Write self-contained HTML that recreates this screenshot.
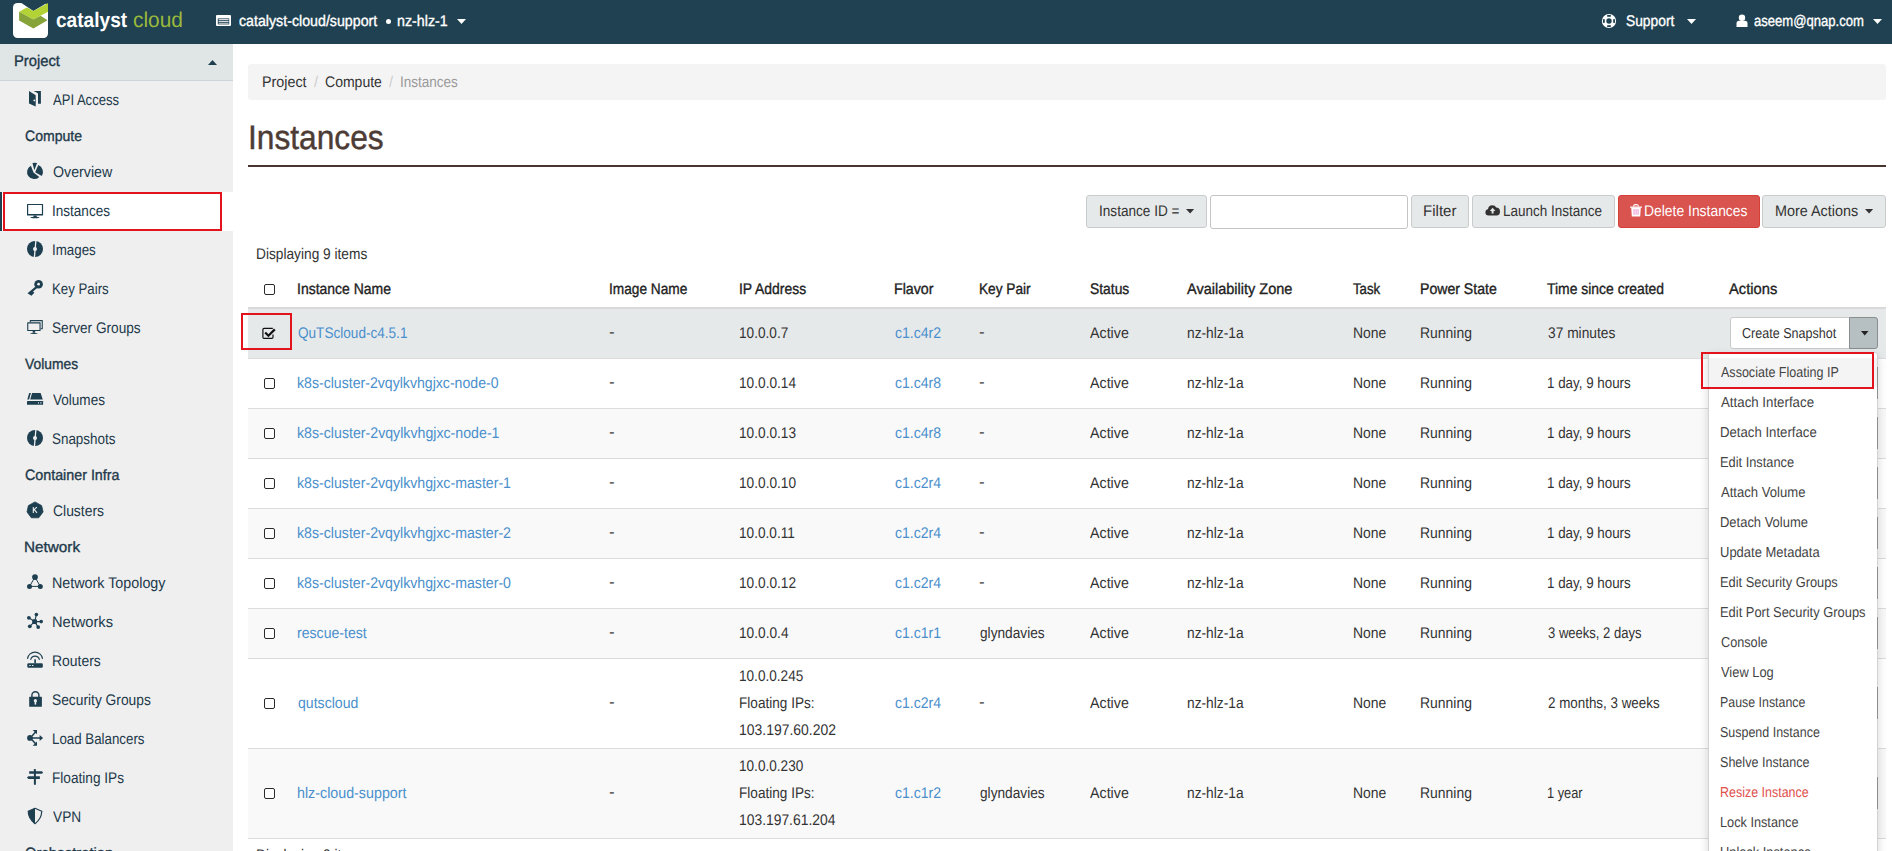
<!DOCTYPE html>
<html><head><meta charset="utf-8"><title>Instances</title>
<style>
*{box-sizing:border-box;margin:0;padding:0}
html,body{width:1892px;height:851px;overflow:hidden;background:#fff;font-family:"Liberation Sans", sans-serif}
.t{position:absolute;line-height:1;white-space:nowrap;transform-origin:0 0;text-rendering:geometricPrecision}
.r{position:absolute}
svg.r{overflow:visible}
</style></head><body>
<div class="r" style="left:0px;top:0px;width:1892px;height:44px;background:#1f4151"></div>
<svg class="r" style="left:0px;top:0px" width="60" height="44" viewBox="0 0 60 44">
<rect x="13" y="3" width="35" height="35" rx="4.5" fill="#fff"/>
<polygon points="19.9,2 33.4,10.9 48.5,2" fill="#1f4151"/>
<polygon points="19.1,11.8 26.8,7.4 33.4,10.9 48,3 48,11.8 33.4,19.5" fill="#b2d235"/>
<polygon points="19.1,11.8 33.4,19.5 40.6,15.8 47.5,20.2 33.4,28.4 19.1,20.5" fill="#86a33a"/>
</svg>
<div class="t" style="left:56.19px;top:10.22px;font-size:21px;font-weight:700;color:#fff;transform:scaleX(0.9091);">catalyst</div>
<div class="t" style="left:132.73px;top:9.80px;font-size:21.5px;font-weight:400;color:#9ab83c;transform:scaleX(0.9714);">cloud</div>
<svg class="r" style="left:216px;top:15px" width="15" height="11" viewBox="0 0 15 11"><rect x="0" y="0" width="15" height="11" rx="1" fill="#fff"/>
<rect x="1.8" y="3.4" width="11.4" height="6" fill="#1f4151"/>
<rect x="2.6" y="4.2" width="10" height="1" fill="#fff"/><rect x="2.6" y="6.2" width="10" height="1" fill="#fff"/><rect x="2.6" y="8.2" width="10" height="0.6" fill="#fff"/></svg>
<div class="t" style="left:238.50px;top:13.76px;font-size:15.4px;font-weight:400;-webkit-text-stroke-width:0.35px;color:#fff;transform:scaleX(0.9233);">catalyst-cloud/support</div>
<div class="r" style="left:386px;top:19px;width:5px;height:5px;background:#fff;border-radius:50%"></div>
<div class="t" style="left:397.07px;top:13.76px;font-size:15.4px;font-weight:400;-webkit-text-stroke-width:0.35px;color:#fff;transform:scaleX(0.9259);">nz-hlz-1</div>
<svg class="r" style="left:457px;top:18.5px" width="9" height="5" viewBox="0 0 9 5"><polygon points="0,0 9,0 4.5,5" fill="#fff"/></svg>
<svg class="r" style="left:1601px;top:13px" width="16" height="16" viewBox="0 0 16 16"><circle cx="8" cy="8" r="7.1" fill="#fff"/><circle cx="8" cy="8" r="2.7" fill="#1f4151"/>
<rect x="6.2" y="2.0" width="3.6" height="1.8" fill="#1f4151"/><rect x="6.2" y="12.2" width="3.6" height="1.8" fill="#1f4151"/>
<rect x="2.0" y="6.2" width="1.8" height="3.6" fill="#1f4151"/><rect x="12.2" y="6.2" width="1.8" height="3.6" fill="#1f4151"/></svg>
<div class="t" style="left:1626.40px;top:13.56px;font-size:15.4px;font-weight:400;-webkit-text-stroke-width:0.35px;color:#fff;transform:scaleX(0.8964);">Support</div>
<svg class="r" style="left:1687px;top:18.5px" width="9" height="5" viewBox="0 0 9 5"><polygon points="0,0 9,0 4.5,5" fill="#fff"/></svg>
<svg class="r" style="left:1736px;top:14px" width="12" height="14" viewBox="0 0 12 14"><circle cx="6" cy="3.7" r="3.2" fill="#fff"/><path d="M0.5 13 L0.5 9.5 Q0.5 6.8 3 6.8 L9 6.8 Q11.5 6.8 11.5 9.5 L11.5 13 Z" fill="#fff"/></svg>
<div class="t" style="left:1754.40px;top:13.56px;font-size:15.4px;font-weight:400;-webkit-text-stroke-width:0.35px;color:#fff;transform:scaleX(0.8496);">aseem@qnap.com</div>
<svg class="r" style="left:1873px;top:18.5px" width="9" height="5" viewBox="0 0 9 5"><polygon points="0,0 9,0 4.5,5" fill="#fff"/></svg>
<div class="r" style="left:0px;top:44px;width:233px;height:807px;background:#efefef"></div>
<div class="r" style="left:0px;top:44px;width:233px;height:36px;background:#e0e5e6"></div>
<div class="r" style="left:0px;top:80px;width:233px;height:1px;background:#cbd4d7"></div>
<div class="t" style="left:14.34px;top:53.66px;font-size:15.4px;font-weight:400;-webkit-text-stroke-width:0.35px;color:#22394a;transform:scaleX(0.9596);">Project</div>
<svg class="r" style="left:208px;top:60px" width="9" height="5" viewBox="0 0 9 5"><polygon points="0,5 4.5,0 9,5" fill="#1e3f50"/></svg>
<svg class="r" style="left:22px;top:88px" width="26" height="26" viewBox="0 0 26 26"><polygon points="7,2.9 13.7,7.2 13.7,18.6 7,15.6" fill="#1e3f50"/><circle cx="12.3" cy="12.4" r="0.9" fill="#efefef"/><polygon points="11.6,2.9 18.9,2.9 18.9,15.7 16,15.7 16,5.4 14.6,4.4 Z" fill="#1e3f50"/></svg>
<div class="t" style="left:52.80px;top:93.16px;font-size:15.4px;font-weight:400;color:#22394a;transform:scaleX(0.8474);">API Access</div>
<div class="t" style="left:25.20px;top:129.10px;font-size:15.0px;font-weight:400;-webkit-text-stroke-width:0.35px;color:#22394a;transform:scaleX(0.9361);">Compute</div>
<svg class="r" style="left:22px;top:158px" width="26" height="26" viewBox="0 0 26 26"><path d="M11.5 14.4 L8.9 7.7 A7.1 7.1 0 1 0 17.3 18.9 Z" fill="#1e3f50"/><path d="M13.2 14.2 L16.3 7.1 A7.3 7.3 0 0 1 19.8 17.9 Z" fill="#1e3f50"/><path d="M10.5 4.9 Q12.8 4.4 15.1 4.9 L12.3 12.2 Z" fill="#1e3f50"/></svg>
<div class="t" style="left:52.80px;top:165.16px;font-size:15.4px;font-weight:400;color:#22394a;transform:scaleX(0.9234);">Overview</div>
<div class="r" style="left:0px;top:192px;width:233px;height:39px;background:#fff"></div>
<div class="r" style="left:0px;top:192px;width:2px;height:39px;background:#1f4151"></div>
<svg class="r" style="left:22px;top:197px" width="26" height="26" viewBox="0 0 26 26"><path d="M5.5 6.9 H20.6 Q21.1 6.9 21.1 7.4 V18.1 Q21.1 18.6 20.6 18.6 H5.5 Q5 18.6 5 18.1 V7.4 Q5 6.9 5.5 6.9 Z M6.2 8.1 V17 H19.9 V8.1 Z" fill="#1e3f50" fill-rule="evenodd"/><rect x="11.5" y="18.5" width="3.2" height="1.6" fill="#1e3f50"/><ellipse cx="12.9" cy="20.5" rx="4.6" ry="0.7" fill="#1e3f50"/></svg>
<div class="t" style="left:51.92px;top:204.16px;font-size:15.4px;font-weight:400;color:#22394a;transform:scaleX(0.8800);">Instances</div>
<svg class="r" style="left:22px;top:236px" width="26" height="26" viewBox="0 0 26 26"><circle cx="13" cy="13" r="8" fill="#1e3f50"/><path d="M13.9 4.5 L12.4 21.5" stroke="#efefef" stroke-width="1.3"/><circle cx="13" cy="13" r="2" fill="#efefef"/></svg>
<div class="t" style="left:51.93px;top:243.16px;font-size:15.4px;font-weight:400;color:#22394a;transform:scaleX(0.8673);">Images</div>
<svg class="r" style="left:22px;top:275px" width="26" height="26" viewBox="0 0 26 26"><circle cx="16.6" cy="9.2" r="4.3" fill="#1e3f50"/><circle cx="16.6" cy="9.2" r="1.4" fill="#efefef"/><path d="M13.6 11.6 L5.5 18.2 L7 19.3 L9.4 20.8 L12.4 17.8 L11 16.6 L15.2 13" fill="#1e3f50"/></svg>
<div class="t" style="left:51.94px;top:282.16px;font-size:15.4px;font-weight:400;color:#22394a;transform:scaleX(0.8615);">Key Pairs</div>
<svg class="r" style="left:22px;top:314px" width="26" height="26" viewBox="0 0 26 26"><path d="M7.8 6.1 H20.3 Q20.8 6.1 20.8 6.6 V14.8 Q20.8 15.3 20.3 15.3 H18.6 V14.2 H19.7 V7.2 H8.9 V8.2 H7.8 V6.6 Q7.8 6.1 8.3 6.1 Z" fill="#1e3f50"/><path d="M5.7 8.2 H18.1 Q18.6 8.2 18.6 8.7 V16.6 Q18.6 17.1 18.1 17.1 H5.7 Q5.2 17.1 5.2 16.6 V8.7 Q5.2 8.2 5.7 8.2 Z M6.3 9.4 V16 H17.5 V9.4 Z" fill="#1e3f50" fill-rule="evenodd"/><rect x="10.7" y="17" width="2.4" height="1.7" fill="#1e3f50"/><ellipse cx="11.9" cy="19.3" rx="3.8" ry="0.65" fill="#1e3f50"/></svg>
<div class="t" style="left:51.91px;top:321.16px;font-size:15.4px;font-weight:400;color:#22394a;transform:scaleX(0.8859);">Server Groups</div>
<div class="t" style="left:25.20px;top:357.10px;font-size:15.0px;font-weight:400;-webkit-text-stroke-width:0.35px;color:#22394a;transform:scaleX(0.9224);">Volumes</div>
<svg class="r" style="left:22px;top:386px" width="26" height="26" viewBox="0 0 26 26"><polygon points="10.1,7 18.6,7 20.8,13.6 8.2,13.6" fill="#1e3f50"/><polygon points="7.2,7 8.9,7 7.1,13.6 5.3,13.6" fill="#1e3f50"/><rect x="5" y="15" width="16.1" height="3.8" rx="0.4" fill="#1e3f50"/><rect x="16" y="16.3" width="1" height="1.1" fill="#efefef"/><rect x="18.2" y="16.3" width="1.3" height="1.1" fill="#efefef"/></svg>
<div class="t" style="left:52.80px;top:393.16px;font-size:15.4px;font-weight:400;color:#22394a;transform:scaleX(0.8797);">Volumes</div>
<svg class="r" style="left:22px;top:425px" width="26" height="26" viewBox="0 0 26 26"><circle cx="13" cy="13" r="8" fill="#1e3f50"/><path d="M13.9 4.5 L12.4 21.5" stroke="#efefef" stroke-width="1.3"/><circle cx="13" cy="13" r="2" fill="#efefef"/></svg>
<div class="t" style="left:51.93px;top:432.16px;font-size:15.4px;font-weight:400;color:#22394a;transform:scaleX(0.8718);">Snapshots</div>
<div class="t" style="left:25.20px;top:468.10px;font-size:15.0px;font-weight:400;-webkit-text-stroke-width:0.35px;color:#22394a;transform:scaleX(0.9520);">Container Infra</div>
<svg class="r" style="left:22px;top:497px" width="26" height="26" viewBox="0 0 26 26"><polygon points="13,4.9 19.6,8.6 21.1,14.9 16.7,20.8 9.3,20.8 5,14.9 6.4,8.6" fill="#1e3f50" stroke="#1e3f50" stroke-width="0.8" stroke-linejoin="round"/><path d="M11.3 10.1 V15.9 M11.5 13.2 L14.9 10.1 M12.3 12.6 L15 15.8" stroke="#efefef" stroke-width="1.1"/></svg>
<div class="t" style="left:52.80px;top:504.16px;font-size:15.4px;font-weight:400;color:#22394a;transform:scaleX(0.9036);">Clusters</div>
<div class="t" style="left:24.18px;top:540.10px;font-size:15.0px;font-weight:400;-webkit-text-stroke-width:0.35px;color:#22394a;transform:scaleX(1.0185);">Network</div>
<svg class="r" style="left:22px;top:569px" width="26" height="26" viewBox="0 0 26 26"><path d="M13 8.1 L7.5 17.4 L18.3 17.4 Z" fill="none" stroke="#1e3f50" stroke-width="1"/><circle cx="13" cy="8.1" r="2.9" fill="#1e3f50"/><circle cx="7.5" cy="17.4" r="2.5" fill="#1e3f50"/><circle cx="18.3" cy="17.4" r="2.5" fill="#1e3f50"/></svg>
<div class="t" style="left:51.87px;top:576.16px;font-size:15.4px;font-weight:400;color:#22394a;transform:scaleX(0.9298);">Network Topology</div>
<svg class="r" style="left:22px;top:608px" width="26" height="26" viewBox="0 0 26 26"><path d="M12.6 13.6 L14.4 6.6 M12.6 13.6 L6.9 9.8 M12.6 13.6 L19.2 13.6 M12.6 13.6 L7.8 18.3 M12.6 13.6 L16.2 19.1" stroke="#1e3f50" stroke-width="1.1"/><rect x="10.2" y="11.3" width="4.8" height="4.6" rx="1" fill="#1e3f50"/><circle cx="14.4" cy="6.6" r="1.8" fill="#1e3f50"/><circle cx="6.9" cy="9.8" r="1.9" fill="#1e3f50"/><circle cx="19.2" cy="13.6" r="1.8" fill="#1e3f50"/><circle cx="7.8" cy="18.3" r="1.9" fill="#1e3f50"/><circle cx="16.2" cy="19.1" r="1.9" fill="#1e3f50"/></svg>
<div class="t" style="left:51.85px;top:615.16px;font-size:15.4px;font-weight:400;color:#22394a;transform:scaleX(0.9508);">Networks</div>
<svg class="r" style="left:22px;top:647px" width="26" height="26" viewBox="0 0 26 26"><path d="M5.6 11.4 A7.5 7.5 0 0 1 20.4 11.4" fill="none" stroke="#1e3f50" stroke-width="1.2" stroke-linecap="round"/><path d="M8.8 12.3 A4.4 4.4 0 0 1 17.3 12.3" fill="none" stroke="#1e3f50" stroke-width="1.2" stroke-linecap="round"/><rect x="12.3" y="12.3" width="1.6" height="4.2" fill="#1e3f50"/><rect x="5.3" y="16.2" width="15.5" height="4.6" rx="1.2" fill="#1e3f50"/><rect x="7.3" y="18" width="1.4" height="1" fill="#efefef"/><rect x="10" y="18" width="1.4" height="1" fill="#efefef"/></svg>
<div class="t" style="left:51.89px;top:654.16px;font-size:15.4px;font-weight:400;color:#22394a;transform:scaleX(0.9057);">Routers</div>
<svg class="r" style="left:22px;top:686px" width="26" height="26" viewBox="0 0 26 26"><path d="M9.9 11 V9.3 A3.5 3.5 0 0 1 16.9 9.3 V11" fill="none" stroke="#1e3f50" stroke-width="1.4"/><rect x="7.2" y="10.8" width="12.7" height="10" rx="0.5" fill="#1e3f50"/><circle cx="13.4" cy="14.7" r="1.6" fill="#efefef"/><rect x="12.6" y="14.7" width="1.6" height="3.9" fill="#efefef"/></svg>
<div class="t" style="left:51.90px;top:693.16px;font-size:15.4px;font-weight:400;color:#22394a;transform:scaleX(0.8954);">Security Groups</div>
<svg class="r" style="left:22px;top:725px" width="26" height="26" viewBox="0 0 26 26"><circle cx="8" cy="12.9" r="2.9" fill="#1e3f50"/><path d="M10 12.9 H18.5 M10 11 L14 6.5 M10 14.8 L14 19.3" stroke="#1e3f50" stroke-width="1.5"/><polygon points="17.6,10 21.1,13 17.6,15.9" fill="#1e3f50"/><polygon points="10.7,5 15,5 15,9.2" fill="#1e3f50"/><polygon points="10.7,20.8 15,20.8 15,16.6" fill="#1e3f50"/></svg>
<div class="t" style="left:51.93px;top:732.16px;font-size:15.4px;font-weight:400;color:#22394a;transform:scaleX(0.8651);">Load Balancers</div>
<svg class="r" style="left:22px;top:764px" width="26" height="26" viewBox="0 0 26 26"><rect x="11.9" y="5" width="2" height="15.8" rx="0.4" fill="#1e3f50"/><polygon points="7.2,7.2 19.9,7.2 21.1,8.5 19.9,9.8 7.2,9.8" fill="#1e3f50"/><polygon points="6.3,12.2 17.9,12.2 17.9,15 6.3,15 5,13.6" fill="#1e3f50"/></svg>
<div class="t" style="left:51.91px;top:771.16px;font-size:15.4px;font-weight:400;color:#22394a;transform:scaleX(0.8862);">Floating IPs</div>
<svg class="r" style="left:22px;top:803px" width="26" height="26" viewBox="0 0 26 26"><path d="M13 5.3 L19.8 8.3 Q19.5 16 13 20.7 Q6.5 16 6.2 8.3 Z" fill="none" stroke="#1e3f50" stroke-width="1.2" stroke-linejoin="round"/><path d="M13 5.3 L6.2 8.3 Q6.5 16 13 20.7 Z" fill="#1e3f50"/></svg>
<div class="t" style="left:52.80px;top:810.16px;font-size:15.4px;font-weight:400;color:#22394a;transform:scaleX(0.8903);">VPN</div>
<div class="t" style="left:25.20px;top:846.10px;font-size:15.0px;font-weight:400;-webkit-text-stroke-width:0.35px;color:#22394a;transform:scaleX(0.9778);">Orchestration</div>
<div class="r" style="left:3px;top:192px;width:219px;height:39px;border:2px solid #e3131e"></div>
<div class="r" style="left:248px;top:64px;width:1638px;height:36px;background:#f4f4f4;border-radius:3px"></div>
<div class="t" style="left:262.37px;top:74.56px;font-size:15.4px;font-weight:400;color:#333;transform:scaleX(0.9298);">Project</div>
<div class="t" style="left:313.50px;top:74.56px;font-size:15.4px;font-weight:400;color:#ccc;transform:scaleX(0.9300);">/</div>
<div class="t" style="left:325.40px;top:74.56px;font-size:15.4px;font-weight:400;color:#333;transform:scaleX(0.9113);">Compute</div>
<div class="t" style="left:388.50px;top:74.56px;font-size:15.4px;font-weight:400;color:#ccc;transform:scaleX(0.9300);">/</div>
<div class="t" style="left:400.32px;top:74.56px;font-size:15.4px;font-weight:400;color:#9a9a9a;transform:scaleX(0.8785);">Instances</div>
<div class="t" style="left:247.80px;top:120.92px;font-size:34px;font-weight:400;color:#4d3c35;transform:scaleX(0.9324);-webkit-text-stroke-width:0.45px;">Instances</div>
<div class="r" style="left:248px;top:165px;width:1638px;height:2px;background:#46352e"></div>
<div class="r" style="left:1086px;top:195px;width:121px;height:33px;background:#e6e9e9;border:1px solid #c9cccc;border-radius:3px"></div>
<div class="t" style="left:1098.62px;top:203.86px;font-size:15.4px;font-weight:400;color:#333;transform:scaleX(0.8833);">Instance ID =</div>
<svg class="r" style="left:1185.8px;top:208.8px" width="8.2" height="4.5" viewBox="0 0 8.2 4.5"><polygon points="0,0 8.2,0 4.1,4.5" fill="#333"/></svg>
<div class="r" style="left:1210px;top:195px;width:198px;height:34px;background:#fff;border:1px solid #c4c4c4;border-radius:3px"></div>
<div class="r" style="left:1411px;top:195px;width:58px;height:33px;background:#e6e9e9;border:1px solid #c9cccc;border-radius:3px"></div>
<div class="t" style="left:1423.02px;top:203.86px;font-size:15.4px;font-weight:400;color:#333;transform:scaleX(0.9788);">Filter</div>
<div class="r" style="left:1472px;top:195px;width:143px;height:33px;background:#e6e9e9;border:1px solid #c9cccc;border-radius:3px"></div>
<svg class="r" style="left:1485px;top:203px" width="16" height="14" viewBox="0 0 16 14"><path d="M3.6 12.5 Q0.4 12.5 0.4 9.3 Q0.4 6.6 3 6.2 Q3.4 2.2 7.4 2.2 Q10.2 2.2 11.2 4.6 Q14.9 4.7 15 8.6 Q15 12.5 11.5 12.5 Z" fill="#333"/><polygon points="7.6,4.7 10.4,8 8.6,8 8.6,10.5 6.6,10.5 6.6,8 4.8,8" fill="#e6e9e9"/></svg>
<div class="t" style="left:1502.92px;top:203.86px;font-size:15.4px;font-weight:400;color:#333;transform:scaleX(0.8768);">Launch Instance</div>
<div class="r" style="left:1618px;top:195px;width:142px;height:33px;background:#d9534f;border:1px solid #d43f3a;border-radius:3px"></div>
<svg class="r" style="left:1630px;top:204px" width="12" height="13" viewBox="0 0 12 13"><rect x="0" y="2.4" width="12" height="1.3" rx="0.4" fill="#fff"/><path d="M3.6 2.6 Q3.6 0.6 5.2 0.6 H6.8 Q8.4 0.6 8.4 2.6" fill="none" stroke="#fff" stroke-width="1.1"/><path d="M1.2 3.6 H10.8 L10.2 12.4 H1.8 Z" fill="#fff"/><rect x="3.6" y="5" width="0.9" height="5.8" fill="#e88ad0"/><rect x="5.6" y="5" width="0.9" height="5.8" fill="#e88ad0"/><rect x="7.6" y="5" width="0.9" height="5.8" fill="#e88ad0"/></svg>
<div class="t" style="left:1643.60px;top:203.86px;font-size:15.4px;font-weight:400;color:#fff;transform:scaleX(0.9027);">Delete Instances</div>
<div class="r" style="left:1762px;top:195px;width:124px;height:33px;background:#e6e9e9;border:1px solid #c9cccc;border-radius:3px"></div>
<div class="t" style="left:1774.87px;top:203.86px;font-size:15.4px;font-weight:400;color:#333;transform:scaleX(0.9341);">More Actions</div>
<svg class="r" style="left:1864.8px;top:208.8px" width="8.2" height="4.5" viewBox="0 0 8.2 4.5"><polygon points="0,0 8.2,0 4.1,4.5" fill="#333"/></svg>
<div class="t" style="left:255.51px;top:247.06px;font-size:15.4px;font-weight:400;color:#333;transform:scaleX(0.8911);">Displaying 9 items</div>
<div class="t" style="left:297.09px;top:282.06px;font-size:15.4px;font-weight:400;-webkit-text-stroke-width:0.35px;color:#222;transform:scaleX(0.9078);">Instance Name</div>
<div class="t" style="left:609.11px;top:282.06px;font-size:15.4px;font-weight:400;-webkit-text-stroke-width:0.35px;color:#222;transform:scaleX(0.8897);">Image Name</div>
<div class="t" style="left:738.89px;top:282.06px;font-size:15.4px;font-weight:400;-webkit-text-stroke-width:0.35px;color:#222;transform:scaleX(0.9055);">IP Address</div>
<div class="t" style="left:894.28px;top:282.06px;font-size:15.4px;font-weight:400;-webkit-text-stroke-width:0.35px;color:#222;transform:scaleX(0.9238);">Flavor</div>
<div class="t" style="left:979.41px;top:282.06px;font-size:15.4px;font-weight:400;-webkit-text-stroke-width:0.35px;color:#222;transform:scaleX(0.8879);">Key Pair</div>
<div class="t" style="left:1090.00px;top:282.06px;font-size:15.4px;font-weight:400;-webkit-text-stroke-width:0.35px;color:#222;transform:scaleX(0.9000);">Status</div>
<div class="t" style="left:1187.00px;top:282.06px;font-size:15.4px;font-weight:400;-webkit-text-stroke-width:0.35px;color:#222;transform:scaleX(0.9429);">Availability Zone</div>
<div class="t" style="left:1352.90px;top:282.06px;font-size:15.4px;font-weight:400;-webkit-text-stroke-width:0.35px;color:#222;transform:scaleX(0.8594);">Task</div>
<div class="t" style="left:1420.08px;top:282.06px;font-size:15.4px;font-weight:400;-webkit-text-stroke-width:0.35px;color:#222;transform:scaleX(0.9157);">Power State</div>
<div class="t" style="left:1547.00px;top:282.06px;font-size:15.4px;font-weight:400;-webkit-text-stroke-width:0.35px;color:#222;transform:scaleX(0.9047);">Time since created</div>
<div class="t" style="left:1729.10px;top:282.06px;font-size:15.4px;font-weight:400;-webkit-text-stroke-width:0.35px;color:#222;transform:scaleX(0.9560);">Actions</div>
<div class="r" style="left:263.5px;top:284.3px;width:11px;height:11px;border:1.4px solid #2a2a2a;border-radius:2px;background:#fff"></div>
<div class="r" style="left:248px;top:307px;width:1638px;height:2px;background:#d9d9d9"></div>
<div class="r" style="left:248px;top:309px;width:1638px;height:49px;background:#e6e9ea"></div>
<div class="r" style="left:248px;top:358px;width:1638px;height:1px;background:#dcdcdc"></div>
<svg class="r" style="left:255px;top:320px" width="26" height="26" viewBox="0 0 26 26"><path d="M17.8 8.4 H9 Q7.9 8.4 7.9 9.5 V17.3 Q7.9 18.4 9 18.4 H16.9 Q18 18.4 18 17.3 V14.6" fill="none" stroke="#111" stroke-width="1.2"/><path d="M10.2 12.5 L13.4 15.8 L19.8 9.4" fill="none" stroke="#111" stroke-width="2.2"/></svg>
<div class="t" style="left:298.40px;top:325.86px;font-size:15.4px;font-weight:400;color:#4a8fcc;transform:scaleX(0.8823);">QuTScloud-c4.5.1</div>
<div class="t" style="left:609.20px;top:325.36px;font-size:15.4px;font-weight:400;color:#333;transform:scaleX(1.1000);">-</div>
<div class="t" style="left:739.31px;top:325.86px;font-size:15.4px;font-weight:400;color:#333;transform:scaleX(0.8852);">10.0.0.7</div>
<div class="t" style="left:895.30px;top:325.86px;font-size:15.4px;font-weight:400;color:#4a8fcc;transform:scaleX(0.9120);">c1.c4r2</div>
<div class="t" style="left:979.20px;top:325.36px;font-size:15.4px;font-weight:400;color:#333;transform:scaleX(1.1000);">-</div>
<div class="t" style="left:1090.10px;top:325.86px;font-size:15.4px;font-weight:400;color:#333;transform:scaleX(0.9262);">Active</div>
<div class="t" style="left:1186.51px;top:325.86px;font-size:15.4px;font-weight:400;color:#333;transform:scaleX(0.8937);">nz-hlz-1a</div>
<div class="t" style="left:1352.59px;top:325.86px;font-size:15.4px;font-weight:400;color:#333;transform:scaleX(0.9056);">None</div>
<div class="t" style="left:1420.49px;top:325.86px;font-size:15.4px;font-weight:400;color:#333;transform:scaleX(0.9054);">Running</div>
<div class="t" style="left:1547.60px;top:325.86px;font-size:15.4px;font-weight:400;color:#333;transform:scaleX(0.8947);">37 minutes</div>
<div class="r" style="left:1729.5px;top:317px;width:121px;height:32px;background:#fff;border:1px solid #c9c9c9;border-radius:3px 0 0 3px"></div>
<div class="t" style="left:1742.40px;top:326.71px;font-size:14.4px;font-weight:400;color:#333;transform:scaleX(0.8722);">Create Snapshot</div>
<div class="r" style="left:1849px;top:317px;width:28.6px;height:32.4px;background:#b6bfc1;border:1px solid #8a8d8e;border-radius:0 3px 3px 0"></div>
<svg class="r" style="left:1861.3px;top:331.2px" width="7.5" height="4.4" viewBox="0 0 7.5 4.4"><polygon points="0,0 7.5,0 3.75,4.4" fill="#222"/></svg>
<div class="r" style="left:248px;top:359px;width:1638px;height:49px;background:#fff"></div>
<div class="r" style="left:248px;top:408px;width:1638px;height:1px;background:#dcdcdc"></div>
<div class="r" style="left:263.5px;top:378.0px;width:11px;height:11px;border:1.4px solid #2a2a2a;border-radius:2px;background:#fff"></div>
<div class="t" style="left:297.48px;top:375.86px;font-size:15.4px;font-weight:400;color:#4a8fcc;transform:scaleX(0.9169);">k8s-cluster-2vqylkvhgjxc-node-0</div>
<div class="t" style="left:609.20px;top:375.36px;font-size:15.4px;font-weight:400;color:#333;transform:scaleX(1.1000);">-</div>
<div class="t" style="left:739.31px;top:375.86px;font-size:15.4px;font-weight:400;color:#333;transform:scaleX(0.8889);">10.0.0.14</div>
<div class="t" style="left:895.30px;top:375.86px;font-size:15.4px;font-weight:400;color:#4a8fcc;transform:scaleX(0.9120);">c1.c4r8</div>
<div class="t" style="left:979.20px;top:375.36px;font-size:15.4px;font-weight:400;color:#333;transform:scaleX(1.1000);">-</div>
<div class="t" style="left:1090.10px;top:375.86px;font-size:15.4px;font-weight:400;color:#333;transform:scaleX(0.9262);">Active</div>
<div class="t" style="left:1186.51px;top:375.86px;font-size:15.4px;font-weight:400;color:#333;transform:scaleX(0.8937);">nz-hlz-1a</div>
<div class="t" style="left:1352.59px;top:375.86px;font-size:15.4px;font-weight:400;color:#333;transform:scaleX(0.9056);">None</div>
<div class="t" style="left:1420.49px;top:375.86px;font-size:15.4px;font-weight:400;color:#333;transform:scaleX(0.9054);">Running</div>
<div class="t" style="left:1546.73px;top:375.86px;font-size:15.4px;font-weight:400;color:#333;transform:scaleX(0.8684);">1 day, 9 hours</div>
<div class="r" style="left:1729.5px;top:367px;width:148px;height:32px;background:#fff;border:1px solid #c9c9c9;border-radius:3px"></div>
<div class="r" style="left:248px;top:409px;width:1638px;height:49px;background:#f9f9f9"></div>
<div class="r" style="left:248px;top:458px;width:1638px;height:1px;background:#dcdcdc"></div>
<div class="r" style="left:263.5px;top:428.0px;width:11px;height:11px;border:1.4px solid #2a2a2a;border-radius:2px;background:#fff"></div>
<div class="t" style="left:297.48px;top:425.86px;font-size:15.4px;font-weight:400;color:#4a8fcc;transform:scaleX(0.9211);">k8s-cluster-2vqylkvhgjxc-node-1</div>
<div class="t" style="left:609.20px;top:425.36px;font-size:15.4px;font-weight:400;color:#333;transform:scaleX(1.1000);">-</div>
<div class="t" style="left:739.31px;top:425.86px;font-size:15.4px;font-weight:400;color:#333;transform:scaleX(0.8889);">10.0.0.13</div>
<div class="t" style="left:895.30px;top:425.86px;font-size:15.4px;font-weight:400;color:#4a8fcc;transform:scaleX(0.9120);">c1.c4r8</div>
<div class="t" style="left:979.20px;top:425.36px;font-size:15.4px;font-weight:400;color:#333;transform:scaleX(1.1000);">-</div>
<div class="t" style="left:1090.10px;top:425.86px;font-size:15.4px;font-weight:400;color:#333;transform:scaleX(0.9262);">Active</div>
<div class="t" style="left:1186.51px;top:425.86px;font-size:15.4px;font-weight:400;color:#333;transform:scaleX(0.8937);">nz-hlz-1a</div>
<div class="t" style="left:1352.59px;top:425.86px;font-size:15.4px;font-weight:400;color:#333;transform:scaleX(0.9056);">None</div>
<div class="t" style="left:1420.49px;top:425.86px;font-size:15.4px;font-weight:400;color:#333;transform:scaleX(0.9054);">Running</div>
<div class="t" style="left:1546.73px;top:425.86px;font-size:15.4px;font-weight:400;color:#333;transform:scaleX(0.8684);">1 day, 9 hours</div>
<div class="r" style="left:1729.5px;top:417px;width:148px;height:32px;background:#fff;border:1px solid #c9c9c9;border-radius:3px"></div>
<div class="r" style="left:248px;top:459px;width:1638px;height:49px;background:#fff"></div>
<div class="r" style="left:248px;top:508px;width:1638px;height:1px;background:#dcdcdc"></div>
<div class="r" style="left:263.5px;top:478.0px;width:11px;height:11px;border:1.4px solid #2a2a2a;border-radius:2px;background:#fff"></div>
<div class="t" style="left:297.48px;top:475.86px;font-size:15.4px;font-weight:400;color:#4a8fcc;transform:scaleX(0.9199);">k8s-cluster-2vqylkvhgjxc-master-1</div>
<div class="t" style="left:609.20px;top:475.36px;font-size:15.4px;font-weight:400;color:#333;transform:scaleX(1.1000);">-</div>
<div class="t" style="left:739.31px;top:475.86px;font-size:15.4px;font-weight:400;color:#333;transform:scaleX(0.8889);">10.0.0.10</div>
<div class="t" style="left:895.30px;top:475.86px;font-size:15.4px;font-weight:400;color:#4a8fcc;transform:scaleX(0.9120);">c1.c2r4</div>
<div class="t" style="left:979.20px;top:475.36px;font-size:15.4px;font-weight:400;color:#333;transform:scaleX(1.1000);">-</div>
<div class="t" style="left:1090.10px;top:475.86px;font-size:15.4px;font-weight:400;color:#333;transform:scaleX(0.9262);">Active</div>
<div class="t" style="left:1186.51px;top:475.86px;font-size:15.4px;font-weight:400;color:#333;transform:scaleX(0.8937);">nz-hlz-1a</div>
<div class="t" style="left:1352.59px;top:475.86px;font-size:15.4px;font-weight:400;color:#333;transform:scaleX(0.9056);">None</div>
<div class="t" style="left:1420.49px;top:475.86px;font-size:15.4px;font-weight:400;color:#333;transform:scaleX(0.9054);">Running</div>
<div class="t" style="left:1546.73px;top:475.86px;font-size:15.4px;font-weight:400;color:#333;transform:scaleX(0.8684);">1 day, 9 hours</div>
<div class="r" style="left:1729.5px;top:467px;width:148px;height:32px;background:#fff;border:1px solid #c9c9c9;border-radius:3px"></div>
<div class="r" style="left:248px;top:509px;width:1638px;height:49px;background:#f9f9f9"></div>
<div class="r" style="left:248px;top:558px;width:1638px;height:1px;background:#dcdcdc"></div>
<div class="r" style="left:263.5px;top:528.0px;width:11px;height:11px;border:1.4px solid #2a2a2a;border-radius:2px;background:#fff"></div>
<div class="t" style="left:297.48px;top:525.86px;font-size:15.4px;font-weight:400;color:#4a8fcc;transform:scaleX(0.9199);">k8s-cluster-2vqylkvhgjxc-master-2</div>
<div class="t" style="left:609.20px;top:525.36px;font-size:15.4px;font-weight:400;color:#333;transform:scaleX(1.1000);">-</div>
<div class="t" style="left:739.31px;top:525.86px;font-size:15.4px;font-weight:400;color:#333;transform:scaleX(0.8871);">10.0.0.11</div>
<div class="t" style="left:895.30px;top:525.86px;font-size:15.4px;font-weight:400;color:#4a8fcc;transform:scaleX(0.9120);">c1.c2r4</div>
<div class="t" style="left:979.20px;top:525.36px;font-size:15.4px;font-weight:400;color:#333;transform:scaleX(1.1000);">-</div>
<div class="t" style="left:1090.10px;top:525.86px;font-size:15.4px;font-weight:400;color:#333;transform:scaleX(0.9262);">Active</div>
<div class="t" style="left:1186.51px;top:525.86px;font-size:15.4px;font-weight:400;color:#333;transform:scaleX(0.8937);">nz-hlz-1a</div>
<div class="t" style="left:1352.59px;top:525.86px;font-size:15.4px;font-weight:400;color:#333;transform:scaleX(0.9056);">None</div>
<div class="t" style="left:1420.49px;top:525.86px;font-size:15.4px;font-weight:400;color:#333;transform:scaleX(0.9054);">Running</div>
<div class="t" style="left:1546.73px;top:525.86px;font-size:15.4px;font-weight:400;color:#333;transform:scaleX(0.8684);">1 day, 9 hours</div>
<div class="r" style="left:1729.5px;top:517px;width:148px;height:32px;background:#fff;border:1px solid #c9c9c9;border-radius:3px"></div>
<div class="r" style="left:248px;top:559px;width:1638px;height:49px;background:#fff"></div>
<div class="r" style="left:248px;top:608px;width:1638px;height:1px;background:#dcdcdc"></div>
<div class="r" style="left:263.5px;top:578.0px;width:11px;height:11px;border:1.4px solid #2a2a2a;border-radius:2px;background:#fff"></div>
<div class="t" style="left:297.48px;top:575.86px;font-size:15.4px;font-weight:400;color:#4a8fcc;transform:scaleX(0.9199);">k8s-cluster-2vqylkvhgjxc-master-0</div>
<div class="t" style="left:609.20px;top:575.36px;font-size:15.4px;font-weight:400;color:#333;transform:scaleX(1.1000);">-</div>
<div class="t" style="left:739.31px;top:575.86px;font-size:15.4px;font-weight:400;color:#333;transform:scaleX(0.8889);">10.0.0.12</div>
<div class="t" style="left:895.30px;top:575.86px;font-size:15.4px;font-weight:400;color:#4a8fcc;transform:scaleX(0.9120);">c1.c2r4</div>
<div class="t" style="left:979.20px;top:575.36px;font-size:15.4px;font-weight:400;color:#333;transform:scaleX(1.1000);">-</div>
<div class="t" style="left:1090.10px;top:575.86px;font-size:15.4px;font-weight:400;color:#333;transform:scaleX(0.9262);">Active</div>
<div class="t" style="left:1186.51px;top:575.86px;font-size:15.4px;font-weight:400;color:#333;transform:scaleX(0.8937);">nz-hlz-1a</div>
<div class="t" style="left:1352.59px;top:575.86px;font-size:15.4px;font-weight:400;color:#333;transform:scaleX(0.9056);">None</div>
<div class="t" style="left:1420.49px;top:575.86px;font-size:15.4px;font-weight:400;color:#333;transform:scaleX(0.9054);">Running</div>
<div class="t" style="left:1546.73px;top:575.86px;font-size:15.4px;font-weight:400;color:#333;transform:scaleX(0.8684);">1 day, 9 hours</div>
<div class="r" style="left:1729.5px;top:567px;width:148px;height:32px;background:#fff;border:1px solid #c9c9c9;border-radius:3px"></div>
<div class="r" style="left:248px;top:609px;width:1638px;height:49px;background:#f9f9f9"></div>
<div class="r" style="left:248px;top:658px;width:1638px;height:1px;background:#dcdcdc"></div>
<div class="r" style="left:263.5px;top:628.0px;width:11px;height:11px;border:1.4px solid #2a2a2a;border-radius:2px;background:#fff"></div>
<div class="t" style="left:297.48px;top:625.86px;font-size:15.4px;font-weight:400;color:#4a8fcc;transform:scaleX(0.9160);">rescue-test</div>
<div class="t" style="left:609.20px;top:625.36px;font-size:15.4px;font-weight:400;color:#333;transform:scaleX(1.1000);">-</div>
<div class="t" style="left:739.31px;top:625.86px;font-size:15.4px;font-weight:400;color:#333;transform:scaleX(0.8907);">10.0.0.4</div>
<div class="t" style="left:895.30px;top:625.86px;font-size:15.4px;font-weight:400;color:#4a8fcc;transform:scaleX(0.9120);">c1.c1r1</div>
<div class="t" style="left:980.30px;top:625.86px;font-size:15.4px;font-weight:400;color:#333;transform:scaleX(0.8889);">glyndavies</div>
<div class="t" style="left:1090.10px;top:625.86px;font-size:15.4px;font-weight:400;color:#333;transform:scaleX(0.9262);">Active</div>
<div class="t" style="left:1186.51px;top:625.86px;font-size:15.4px;font-weight:400;color:#333;transform:scaleX(0.8937);">nz-hlz-1a</div>
<div class="t" style="left:1352.59px;top:625.86px;font-size:15.4px;font-weight:400;color:#333;transform:scaleX(0.9056);">None</div>
<div class="t" style="left:1420.49px;top:625.86px;font-size:15.4px;font-weight:400;color:#333;transform:scaleX(0.9054);">Running</div>
<div class="t" style="left:1547.60px;top:625.86px;font-size:15.4px;font-weight:400;color:#333;transform:scaleX(0.8473);">3 weeks, 2 days</div>
<div class="r" style="left:1729.5px;top:617px;width:148px;height:32px;background:#fff;border:1px solid #c9c9c9;border-radius:3px"></div>
<div class="r" style="left:248px;top:659px;width:1638px;height:89px;background:#fff"></div>
<div class="r" style="left:248px;top:748px;width:1638px;height:1px;background:#dcdcdc"></div>
<div class="r" style="left:263.5px;top:698.0px;width:11px;height:11px;border:1.4px solid #2a2a2a;border-radius:2px;background:#fff"></div>
<div class="t" style="left:298.40px;top:695.86px;font-size:15.4px;font-weight:400;color:#4a8fcc;transform:scaleX(0.9154);">qutscloud</div>
<div class="t" style="left:609.20px;top:695.36px;font-size:15.4px;font-weight:400;color:#333;transform:scaleX(1.1000);">-</div>
<div class="t" style="left:739.32px;top:669.11px;font-size:15.4px;font-weight:400;color:#333;transform:scaleX(0.8833);">10.0.0.245</div>
<div class="t" style="left:739.32px;top:695.86px;font-size:15.4px;font-weight:400;color:#333;transform:scaleX(0.8833);">Floating IPs:</div>
<div class="t" style="left:739.29px;top:722.61px;font-size:15.4px;font-weight:400;color:#333;transform:scaleX(0.9066);">103.197.60.202</div>
<div class="t" style="left:895.30px;top:695.86px;font-size:15.4px;font-weight:400;color:#4a8fcc;transform:scaleX(0.9120);">c1.c2r4</div>
<div class="t" style="left:979.20px;top:695.36px;font-size:15.4px;font-weight:400;color:#333;transform:scaleX(1.1000);">-</div>
<div class="t" style="left:1090.10px;top:695.86px;font-size:15.4px;font-weight:400;color:#333;transform:scaleX(0.9262);">Active</div>
<div class="t" style="left:1186.51px;top:695.86px;font-size:15.4px;font-weight:400;color:#333;transform:scaleX(0.8937);">nz-hlz-1a</div>
<div class="t" style="left:1352.59px;top:695.86px;font-size:15.4px;font-weight:400;color:#333;transform:scaleX(0.9056);">None</div>
<div class="t" style="left:1420.49px;top:695.86px;font-size:15.4px;font-weight:400;color:#333;transform:scaleX(0.9054);">Running</div>
<div class="t" style="left:1547.60px;top:695.86px;font-size:15.4px;font-weight:400;color:#333;transform:scaleX(0.8695);">2 months, 3 weeks</div>
<div class="r" style="left:1729.5px;top:667px;width:148px;height:32px;background:#fff;border:1px solid #c9c9c9;border-radius:3px"></div>
<div class="r" style="left:248px;top:749px;width:1638px;height:89px;background:#f9f9f9"></div>
<div class="r" style="left:248px;top:838px;width:1638px;height:1px;background:#dcdcdc"></div>
<div class="r" style="left:263.5px;top:788.0px;width:11px;height:11px;border:1.4px solid #2a2a2a;border-radius:2px;background:#fff"></div>
<div class="t" style="left:297.47px;top:785.86px;font-size:15.4px;font-weight:400;color:#4a8fcc;transform:scaleX(0.9274);">hlz-cloud-support</div>
<div class="t" style="left:609.20px;top:785.36px;font-size:15.4px;font-weight:400;color:#333;transform:scaleX(1.1000);">-</div>
<div class="t" style="left:739.32px;top:759.11px;font-size:15.4px;font-weight:400;color:#333;transform:scaleX(0.8833);">10.0.0.230</div>
<div class="t" style="left:739.32px;top:785.86px;font-size:15.4px;font-weight:400;color:#333;transform:scaleX(0.8833);">Floating IPs:</div>
<div class="t" style="left:739.30px;top:812.61px;font-size:15.4px;font-weight:400;color:#333;transform:scaleX(0.9009);">103.197.61.204</div>
<div class="t" style="left:895.30px;top:785.86px;font-size:15.4px;font-weight:400;color:#4a8fcc;transform:scaleX(0.9120);">c1.c1r2</div>
<div class="t" style="left:980.30px;top:785.86px;font-size:15.4px;font-weight:400;color:#333;transform:scaleX(0.8889);">glyndavies</div>
<div class="t" style="left:1090.10px;top:785.86px;font-size:15.4px;font-weight:400;color:#333;transform:scaleX(0.9262);">Active</div>
<div class="t" style="left:1186.51px;top:785.86px;font-size:15.4px;font-weight:400;color:#333;transform:scaleX(0.8937);">nz-hlz-1a</div>
<div class="t" style="left:1352.59px;top:785.86px;font-size:15.4px;font-weight:400;color:#333;transform:scaleX(0.9056);">None</div>
<div class="t" style="left:1420.49px;top:785.86px;font-size:15.4px;font-weight:400;color:#333;transform:scaleX(0.9054);">Running</div>
<div class="t" style="left:1546.77px;top:785.86px;font-size:15.4px;font-weight:400;color:#333;transform:scaleX(0.8333);">1 year</div>
<div class="r" style="left:1729.5px;top:757px;width:148px;height:32px;background:#fff;border:1px solid #c9c9c9;border-radius:3px"></div>
<div class="r" style="left:241px;top:313px;width:51px;height:37px;border:2px solid #e3131e"></div>
<div class="t" style="left:255.51px;top:848.06px;font-size:15.4px;font-weight:400;color:#333;transform:scaleX(0.8911);">Displaying 9 items</div>
<div class="r" style="left:1708px;top:352px;width:170px;height:520px;background:#fff;border:1px solid #d2d2d2;border-radius:3px;box-shadow:0 4px 10px rgba(0,0,0,.16)"></div>
<div class="r" style="left:1709px;top:358px;width:168px;height:29px;background:#f4f4f4"></div>
<div class="t" style="left:1720.60px;top:365.61px;font-size:14.4px;font-weight:400;color:#444;transform:scaleX(0.8711);">Associate Floating IP</div>
<div class="t" style="left:1720.60px;top:395.61px;font-size:14.4px;font-weight:400;color:#444;transform:scaleX(0.9230);">Attach Interface</div>
<div class="t" style="left:1719.68px;top:425.61px;font-size:14.4px;font-weight:400;color:#444;transform:scaleX(0.9163);">Detach Interface</div>
<div class="t" style="left:1719.71px;top:455.61px;font-size:14.4px;font-weight:400;color:#444;transform:scaleX(0.8902);">Edit Instance</div>
<div class="t" style="left:1720.60px;top:485.61px;font-size:14.4px;font-weight:400;color:#444;transform:scaleX(0.9098);">Attach Volume</div>
<div class="t" style="left:1719.70px;top:515.61px;font-size:14.4px;font-weight:400;color:#444;transform:scaleX(0.9010);">Detach Volume</div>
<div class="t" style="left:1719.70px;top:545.61px;font-size:14.4px;font-weight:400;color:#444;transform:scaleX(0.9027);">Update Metadata</div>
<div class="t" style="left:1719.71px;top:575.61px;font-size:14.4px;font-weight:400;color:#444;transform:scaleX(0.8924);">Edit Security Groups</div>
<div class="t" style="left:1719.70px;top:605.61px;font-size:14.4px;font-weight:400;color:#444;transform:scaleX(0.8963);">Edit Port Security Groups</div>
<div class="t" style="left:1720.60px;top:635.61px;font-size:14.4px;font-weight:400;color:#444;transform:scaleX(0.8808);">Console</div>
<div class="t" style="left:1720.60px;top:665.61px;font-size:14.4px;font-weight:400;color:#444;transform:scaleX(0.8948);">View Log</div>
<div class="t" style="left:1719.74px;top:695.61px;font-size:14.4px;font-weight:400;color:#444;transform:scaleX(0.8612);">Pause Instance</div>
<div class="t" style="left:1719.73px;top:725.61px;font-size:14.4px;font-weight:400;color:#444;transform:scaleX(0.8667);">Suspend Instance</div>
<div class="t" style="left:1719.73px;top:755.61px;font-size:14.4px;font-weight:400;color:#444;transform:scaleX(0.8733);">Shelve Instance</div>
<div class="t" style="left:1719.73px;top:785.61px;font-size:14.4px;font-weight:400;color:#e0504c;transform:scaleX(0.8663);">Resize Instance</div>
<div class="t" style="left:1719.72px;top:815.61px;font-size:14.4px;font-weight:400;color:#444;transform:scaleX(0.8839);">Lock Instance</div>
<div class="t" style="left:1719.71px;top:845.61px;font-size:14.4px;font-weight:400;color:#444;transform:scaleX(0.8911);">Unlock Instance</div>
<div class="r" style="left:1701px;top:352px;width:173px;height:37px;border:2px solid #e3131e"></div>
<div class="r" style="left:1877px;top:367px;width:1px;height:32px;background:#8e8e8e"></div>
<div class="r" style="left:1877px;top:417px;width:1px;height:32px;background:#8e8e8e"></div>
<div class="r" style="left:1877px;top:467px;width:1px;height:32px;background:#8e8e8e"></div>
<div class="r" style="left:1877px;top:517px;width:1px;height:32px;background:#8e8e8e"></div>
<div class="r" style="left:1877px;top:567px;width:1px;height:32px;background:#8e8e8e"></div>
<div class="r" style="left:1877px;top:617px;width:1px;height:32px;background:#8e8e8e"></div>
<div class="r" style="left:1877px;top:687px;width:1px;height:32px;background:#8e8e8e"></div>
<div class="r" style="left:1877px;top:777px;width:1px;height:32px;background:#8e8e8e"></div>
</body></html>
